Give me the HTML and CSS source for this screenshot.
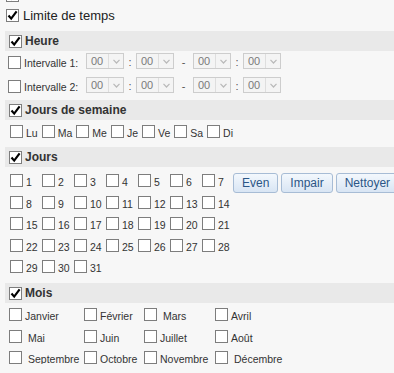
FILE: index.html
```html
<!DOCTYPE html>
<html lang="fr">
<head>
    <meta charset="UTF-8">
    <title>Filtres de temps</title>
    <link rel="stylesheet" href="styles.css">
</head>
<body>

    <div class="panel">
        <label class="opt"><span class="cb"><svg width="11" height="11" viewBox="0 0 11 11"><path d="M1.5 5.5 L4.2 8.6 L9.6 1.4" /></svg></span>Total</label>
        <label class="opt"><span class="cb"><svg width="11" height="11" viewBox="0 0 11 11"><path d="M1.5 5.5 L4.2 8.6 L9.6 1.4" /></svg></span>Limite de temps</label>

        <!-- Heure -->
        <div class="band"><span class="cb"><svg width="11" height="11" viewBox="0 0 11 11"><path d="M1.5 5.5 L4.2 8.6 L9.6 1.4" /></svg></span>Heure</div>
        <div class="hours">
            <div class="irow">
                <span class="cb"></span>
                <span class="ilabel">Intervalle 1:</span>
                <span class="sel"><span class="sel-val">00</span><span class="sel-arrow"><svg width="7" height="5" viewBox="0 0 7 5"><path d="M0.5 0.8 L3.5 4 L6.5 0.8" /></svg></span></span>
                <span class="sep">:</span>
                <span class="sel"><span class="sel-val">00</span><span class="sel-arrow"><svg width="7" height="5" viewBox="0 0 7 5"><path d="M0.5 0.8 L3.5 4 L6.5 0.8" /></svg></span></span>
                <span class="sep dash">-</span>
                <span class="sel"><span class="sel-val">00</span><span class="sel-arrow"><svg width="7" height="5" viewBox="0 0 7 5"><path d="M0.5 0.8 L3.5 4 L6.5 0.8" /></svg></span></span>
                <span class="sep">:</span>
                <span class="sel"><span class="sel-val">00</span><span class="sel-arrow"><svg width="7" height="5" viewBox="0 0 7 5"><path d="M0.5 0.8 L3.5 4 L6.5 0.8" /></svg></span></span>
            </div>
            <div class="irow">
                <span class="cb"></span>
                <span class="ilabel">Intervalle 2:</span>
                <span class="sel"><span class="sel-val">00</span><span class="sel-arrow"><svg width="7" height="5" viewBox="0 0 7 5"><path d="M0.5 0.8 L3.5 4 L6.5 0.8" /></svg></span></span>
                <span class="sep">:</span>
                <span class="sel"><span class="sel-val">00</span><span class="sel-arrow"><svg width="7" height="5" viewBox="0 0 7 5"><path d="M0.5 0.8 L3.5 4 L6.5 0.8" /></svg></span></span>
                <span class="sep dash">-</span>
                <span class="sel"><span class="sel-val">00</span><span class="sel-arrow"><svg width="7" height="5" viewBox="0 0 7 5"><path d="M0.5 0.8 L3.5 4 L6.5 0.8" /></svg></span></span>
                <span class="sep">:</span>
                <span class="sel"><span class="sel-val">00</span><span class="sel-arrow"><svg width="7" height="5" viewBox="0 0 7 5"><path d="M0.5 0.8 L3.5 4 L6.5 0.8" /></svg></span></span>
            </div>
        </div>

        <!-- Jours de semaine -->
        <div class="band"><span class="cb"><svg width="11" height="11" viewBox="0 0 11 11"><path d="M1.5 5.5 L4.2 8.6 L9.6 1.4" /></svg></span>Jours de semaine</div>
        <div class="weekdays">
            <label class="item"><span class="cb"></span><span class="lbl">Lu</span></label>
            <label class="item"><span class="cb"></span><span class="lbl">Ma</span></label>
            <label class="item"><span class="cb"></span><span class="lbl">Me</span></label>
            <label class="item"><span class="cb"></span><span class="lbl">Je</span></label>
            <label class="item"><span class="cb"></span><span class="lbl">Ve</span></label>
            <label class="item"><span class="cb"></span><span class="lbl">Sa</span></label>
            <label class="item"><span class="cb"></span><span class="lbl">Di</span></label>
        </div>

        <!-- Jours -->
        <div class="band"><span class="cb"><svg width="11" height="11" viewBox="0 0 11 11"><path d="M1.5 5.5 L4.2 8.6 L9.6 1.4" /></svg></span>Jours</div>
        <div class="days-body">
            <div class="days" id="days"></div>
            <div class="day-btns">
                <button>Even</button>
                <button>Impair</button>
                <button>Nettoyer</button>
            </div>
        </div>

        <!-- Mois -->
        <div class="band"><span class="cb"><svg width="11" height="11" viewBox="0 0 11 11"><path d="M1.5 5.5 L4.2 8.6 L9.6 1.4" /></svg></span>Mois</div>
        <div class="months">
            <label class="item"><span class="cb"></span><span class="lbl">Janvier</span></label>
            <label class="item"><span class="cb"></span><span class="lbl">Février</span></label>
            <label class="item"><span class="cb"></span><span class="lbl wide">Mars</span></label>
            <label class="item"><span class="cb"></span><span class="lbl">Avril</span></label>
            <label class="item"><span class="cb"></span><span class="lbl wide">Mai</span></label>
            <label class="item"><span class="cb"></span><span class="lbl">Juin</span></label>
            <label class="item"><span class="cb"></span><span class="lbl">Juillet</span></label>
            <label class="item"><span class="cb"></span><span class="lbl">Août</span></label>
            <label class="item"><span class="cb"></span><span class="lbl wide">Septembre</span></label>
            <label class="item"><span class="cb"></span><span class="lbl">Octobre</span></label>
            <label class="item"><span class="cb"></span><span class="lbl">Novembre</span></label>
            <label class="item"><span class="cb"></span><span class="lbl wide">Décembre</span></label>
        </div>
    </div>

    <script>
        const days = document.getElementById('days');
        for (let d = 1; d <= 31; d++) {
            const item = document.createElement('label');
            item.className = 'item';
            item.innerHTML = `<span class="cb"></span><span class="lbl">${d}</span>`;
            days.appendChild(item);
        }
    </script>

</body>
</html>
```

FILE: styles.css
```css
body {
    margin: 0;
    background-color: #f7f7f7;
    font-family: Arial, "Liberation Sans", sans-serif;
    color: #222;
    overflow: hidden;
}
.panel {
    width: 430px;
    margin-top: -15px;
    padding-left: 5px;
}
.cb {
    flex: none;
    width: 13px;
    height: 13px;
    box-sizing: border-box;
    border: 1px solid #7d7d7d;
    background-color: #fff;
    display: flex;
    align-items: center;
    justify-content: center;
}
.cb svg {
    display: block;
}
.cb path {
    fill: none;
    stroke: #000;
    stroke-width: 2.2;
}
.opt {
    height: 20px;
    display: flex;
    align-items: center;
    gap: 4px;
    padding-left: 1px;
    font-size: 13px;
}
.band {
    height: 20px;
    display: flex;
    align-items: center;
    gap: 3px;
    padding-left: 4px;
    background-color: #e9e9e9;
    font-size: 12px;
    font-weight: bold;
    color: #333;
}
.opt + .band {
    margin-top: 6px;
}

/* Heure */
.hours {
    display: flex;
    flex-direction: column;
    gap: 8px;
    padding: 2px 0 7px 3px;
}
.irow {
    height: 16px;
    display: flex;
    align-items: flex-end;
}
.ilabel {
    width: 62px;
    margin-left: 3px;
    font-size: 10.5px;
    line-height: 12px;
    color: #333;
}
.sel {
    width: 38px;
    height: 16px;
    box-sizing: border-box;
    border: 1px solid #cdcdcd;
    background-color: #f4f4f4;
    display: flex;
}
.sel-val {
    flex: 1;
    padding-left: 4px;
    font-size: 11px;
    line-height: 14px;
    color: #7a7a7a;
}
.sel-arrow {
    width: 14px;
    border-left: 1px solid #dedede;
    display: flex;
    align-items: center;
    justify-content: center;
}
.sel-arrow path {
    fill: none;
    stroke: #b9b9b9;
    stroke-width: 1.2;
}
.sep {
    width: 12px;
    text-align: center;
    font-size: 11px;
    line-height: 14px;
    color: #555;
}
.sep.dash {
    width: 19px;
}

/* small checkbox items */
.item {
    height: 13px;
    display: flex;
    align-items: flex-end;
    gap: 3px;
}
.lbl {
    font-size: 10.5px;
    line-height: 10px;
    color: #333;
    white-space: nowrap;
}
.lbl.wide {
    margin-left: 3px;
}
.weekdays {
    display: flex;
    gap: 4px;
    padding: 5px 0 9px 5px;
}

/* Jours */
.days-body {
    display: flex;
    align-items: flex-start;
    padding: 7px 0 10px 5px;
}
.days {
    display: grid;
    grid-template-columns: repeat(7, 32px);
    grid-auto-rows: 13px;
    row-gap: 8.5px;
}
.day-btns {
    display: flex;
    gap: 3px;
    margin: -1px 0 0 -1px;
}
button {
    height: 20px;
    padding: 0 8px;
    border: 1px solid #a7bcd5;
    border-radius: 3px;
    background: linear-gradient(#f3f8fd, #d8e5f4);
    color: #2b5686;
    font-family: Arial, "Liberation Sans", sans-serif;
    font-size: 12px;
    white-space: nowrap;
}

/* Mois */
.months {
    display: grid;
    grid-template-columns: 75px 60px 71px auto;
    grid-auto-rows: 13px;
    row-gap: 8.5px;
    padding: 5px 0 0 4px;
}
```
